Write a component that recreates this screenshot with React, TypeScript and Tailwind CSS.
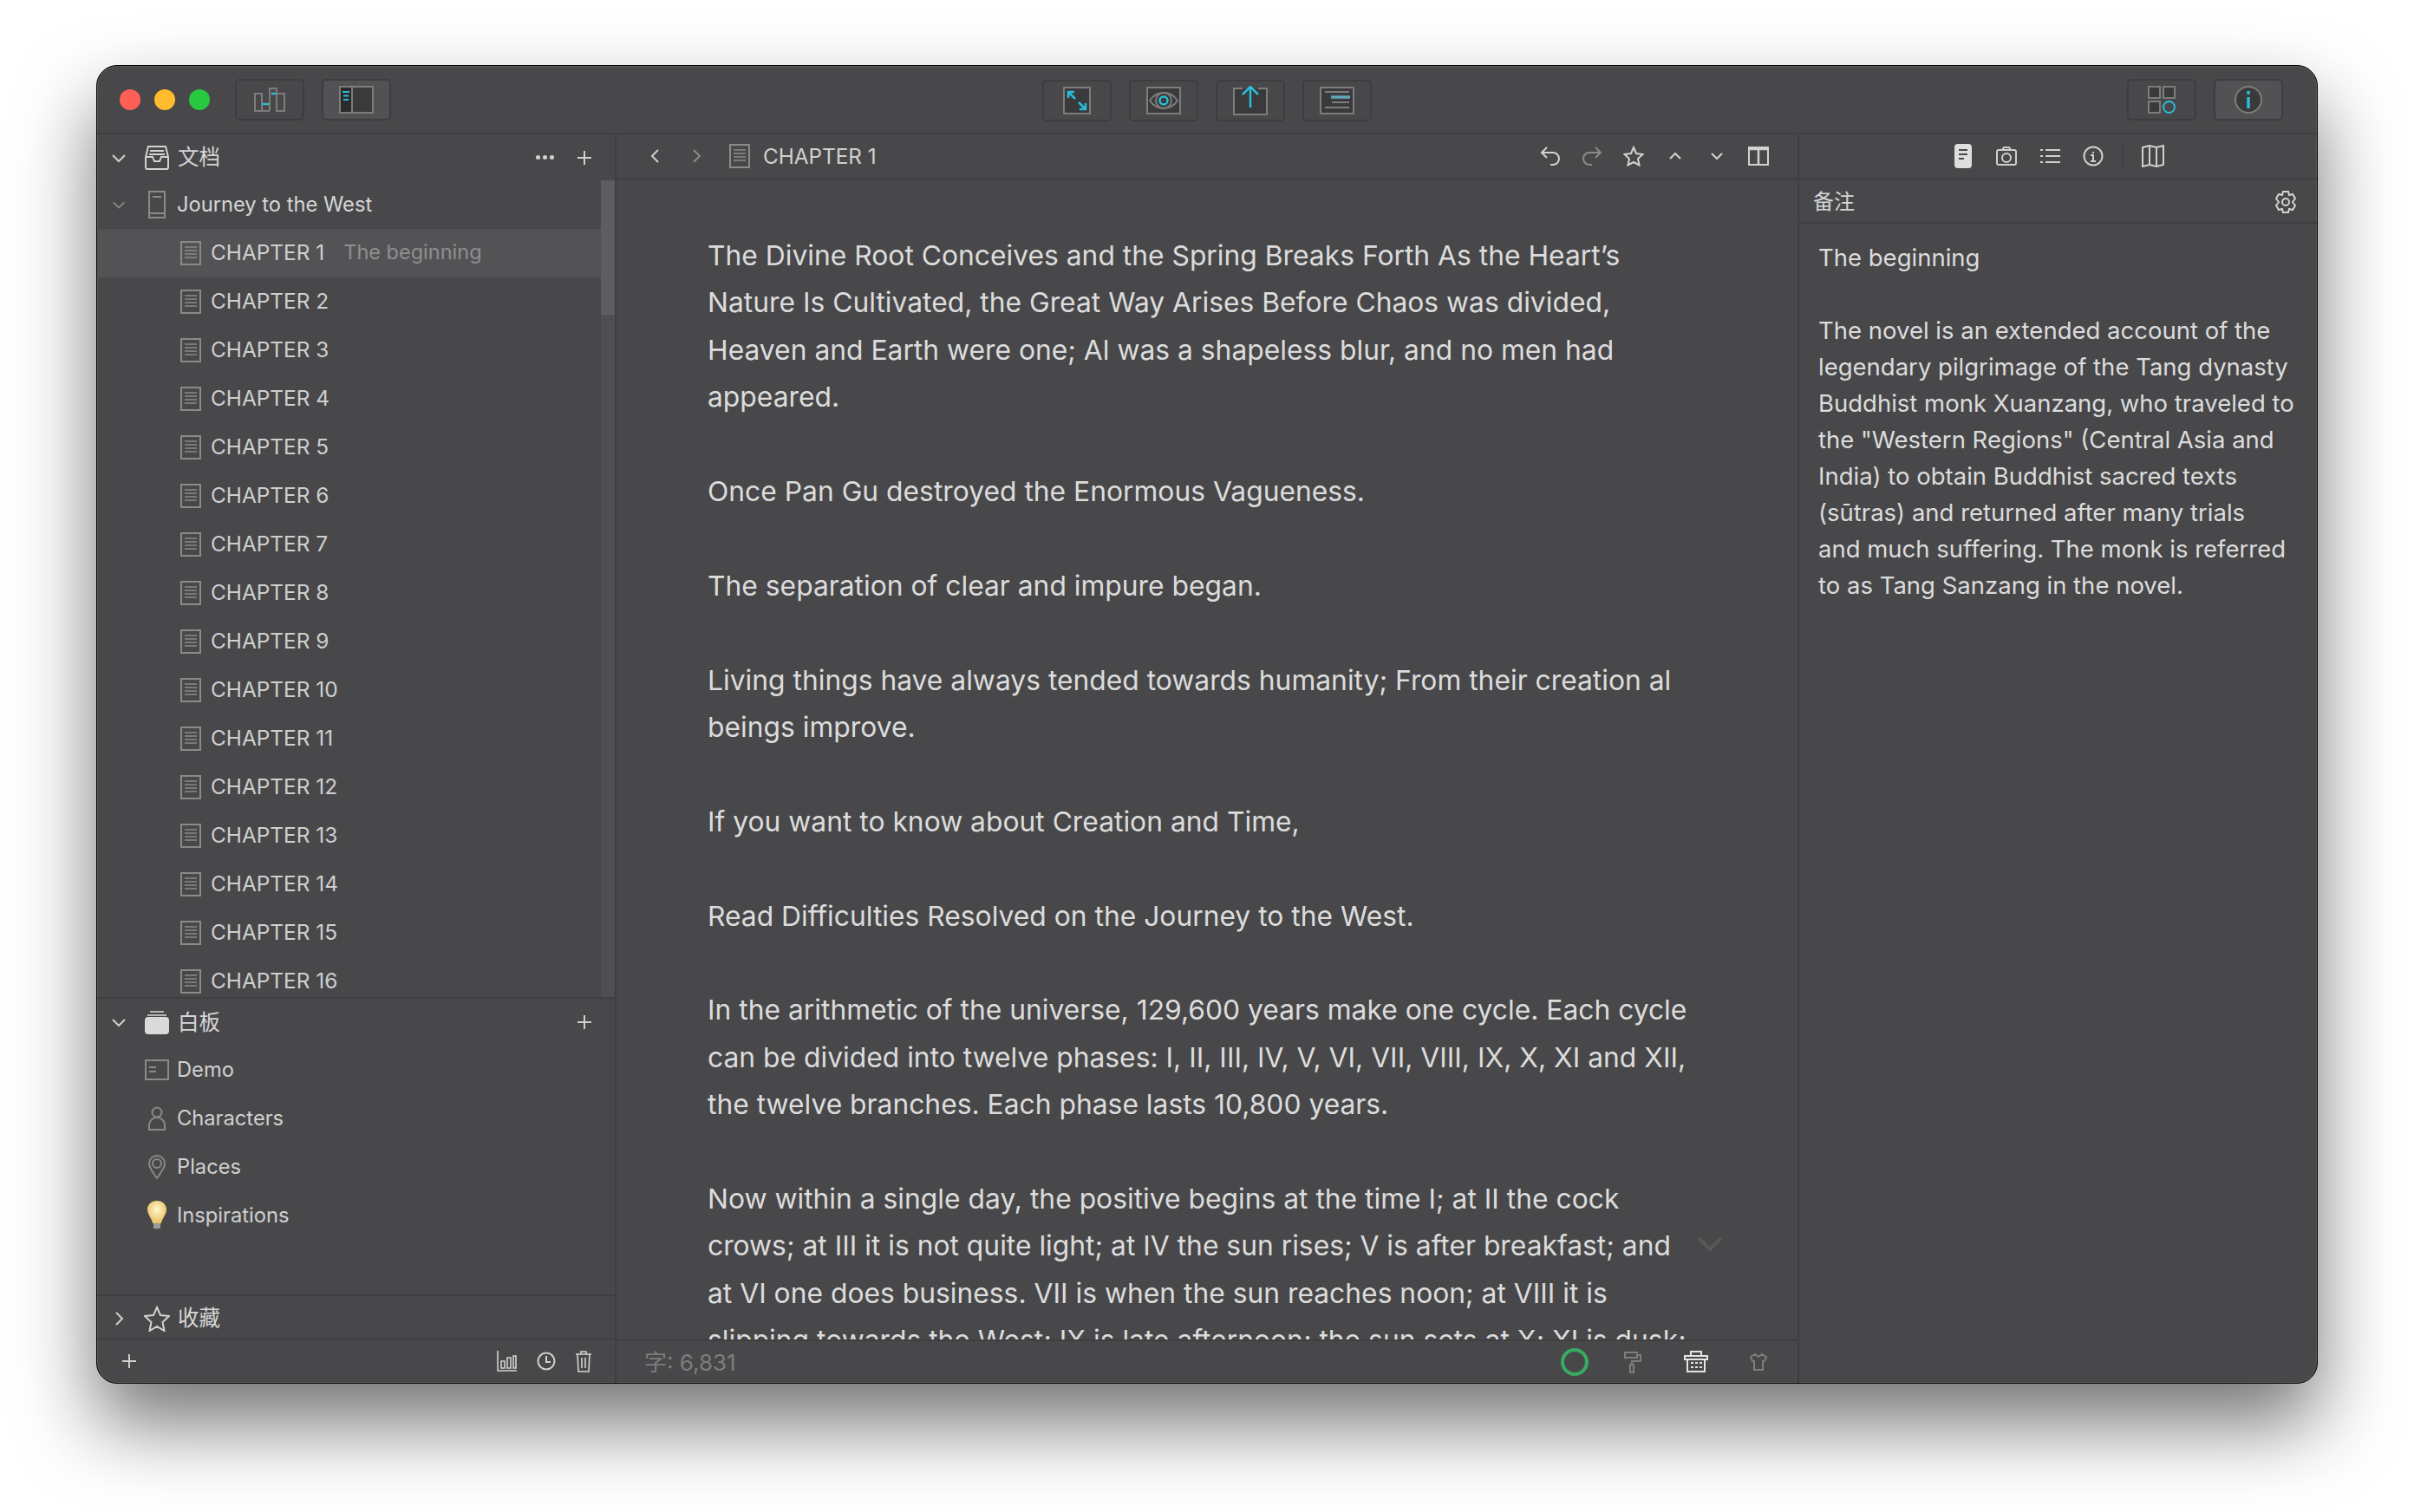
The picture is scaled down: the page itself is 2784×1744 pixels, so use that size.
import type { ReactNode } from "react";

const chapters = Array.from({ length: 16 }, (_, i) => `CHAPTER ${i + 1}`);

const body = [
  [
    "The Divine Root Conceives and the Spring Breaks Forth As the Heart’s",
    "Nature Is Cultivated, the Great Way Arises Before Chaos was divided,",
    "Heaven and Earth were one; Al was a shapeless blur, and no men had",
    "appeared.",
  ],
  ["Once Pan Gu destroyed the Enormous Vagueness."],
  ["The separation of clear and impure began."],
  [
    "Living things have always tended towards humanity; From their creation al",
    "beings improve.",
  ],
  ["If you want to know about Creation and Time,"],
  ["Read Difficulties Resolved on the Journey to the West."],
  [
    "In the arithmetic of the universe, 129,600 years make one cycle. Each cycle",
    "can be divided into twelve phases: I, II, III, IV, V, VI, VII, VIII, IX, X, XI and XII,",
    "the twelve branches. Each phase lasts 10,800 years.",
  ],
  [
    "Now within a single day, the positive begins at the time I; at II the cock",
    "crows; at III it is not quite light; at IV the sun rises; V is after breakfast; and",
    "at VI one does business. VII is when the sun reaches noon; at VIII it is",
    "slipping towards the West; IX is late afternoon; the sun sets at X; XI is dusk;",
  ],
];

const notes = [
  "The novel is an extended account of the",
  "legendary pilgrimage of the Tang dynasty",
  "Buddhist monk Xuanzang, who traveled to",
  "the \"Western Regions\" (Central Asia and",
  "India) to obtain Buddhist sacred texts",
  "(sūtras) and returned after many trials",
  "and much suffering. The monk is referred",
  "to as Tang Sanzang in the novel.",
];

const Icon = ({ size = 28, h, children, color = "#d2d2d2", sw = 2 }: { size?: number; h?: number; children: ReactNode; color?: string; sw?: number }) => (
  <svg width={size} height={h ?? size} viewBox={`0 0 ${size} ${h ?? size}`} fill="none" stroke={color} strokeWidth={sw} className="shrink-0">
    {children}
  </svg>
);

const Chevron = ({ dir, color = "#cfcfcf", s = 20 }: { dir: "down" | "up" | "left" | "right"; color?: string; s?: number }) => {
  const d = {
    down: "M3 7l7 7 7-7",
    up: "M3 13l7-7 7 7",
    left: "M13 3l-7 7 7 7",
    right: "M7 3l7 7-7 7",
  }[dir];
  return (
    <svg width={s} height={s} viewBox="0 0 20 20" fill="none" stroke={color} strokeWidth={2}>
      <path d={d} />
    </svg>
  );
};

const Plus = ({ color = "#cfcfcf" }: { color?: string }) => (
  <Icon size={16} color={color}>
    <path d="M8 0v16M0 8h16" />
  </Icon>
);

const DocIcon = () => (
  <Icon size={24} h={28} color="#8a8a8a">
    <rect x="1" y="1" width="22" height="26" />
    <path d="M5 7h14M5 11h14M5 15h14M5 19h14" strokeWidth="1.6" />
  </Icon>
);

const TitleBtn = ({ active, w = 80, children }: { active?: boolean; w?: number; children: ReactNode }) => (
  <div
    className={`h-[48px] rounded-[5px] border-2 border-[#3d3d3f] flex items-center justify-center shrink-0 ${active ? "bg-[#525254]" : ""}`}
    style={{ width: w }}
  >
    {children}
  </div>
);

const Section = ({ chevron, icon, label, right }: { chevron: ReactNode; icon: ReactNode; label: string; right?: ReactNode }) => (
  <div className="flex items-center h-full">
    <span className="w-[50px] flex justify-center shrink-0">{chevron}</span>
    <span className="w-[38px] flex justify-center shrink-0">{icon}</span>
    <span className="ml-[5px] text-[24.500px] text-[#d6d6d6] leading-none">{label}</span>
    <div className="ml-auto flex items-center gap-[27px] pr-[27px]">{right}</div>
  </div>
);

const BoardRow = ({ icon, label }: { icon: ReactNode; label: string }) => (
  <div className="flex items-center h-[56px] pl-[50px]">
    <span className="w-[38px] flex justify-center shrink-0">{icon}</span>
    <span className="ml-[4px] text-[23.700px] text-[#d0d0d0]">{label}</span>
  </div>
);

const Sidebar = () => (
  <aside className="w-[599px] shrink-0 border-r-2 border-[#3f3f41] flex flex-col">
    <div className="h-[53px] shrink-0">
      <Section
        chevron={<Chevron dir="down" />}
        icon={
          <Icon size={28}>
            <path d="M4 1h20l3 12v12a2 2 0 0 1-2 2H3a2 2 0 0 1-2-2V13zM1 13h8l2 5h6l2-5h8M6 6h16M5 10h18" />
          </Icon>
        }
        label="文档"
        right={
          <>
            <span className="flex gap-[3px]">
              <i className="size-[5px] rounded-full bg-[#d2d2d2]" />
              <i className="size-[5px] rounded-full bg-[#d2d2d2]" />
              <i className="size-[5px] rounded-full bg-[#d2d2d2]" />
            </span>
            <Plus />
          </>
        }
      />
    </div>
    <div className="h-[944px] shrink-0 overflow-hidden relative border-b-2 border-[#3f3f41]">
      <div className="pr-[16px]">
        <div className="flex items-center h-[56px]">
          <span className="w-[50px] flex justify-center shrink-0">
            <Chevron dir="down" color="#8a8a8a" s={18} />
          </span>
          <span className="w-[38px] flex justify-center shrink-0">
            <Icon size={20} h={32} color="#8a8a8a">
              <rect x="1" y="1" width="18" height="30" />
              <path d="M1 26h18M5 7h10" />
            </Icon>
          </span>
          <span className="ml-[4px] text-[23.700px] text-[#d6d6d6]">Journey to the West</span>
        </div>
        {chapters.map((c, i) => (
          <div key={c} className={`flex items-center h-[56px] pl-[96px] gap-[11px] ${i === 0 ? "bg-[#535356]" : ""}`}>
            <DocIcon />
            <span className="mb-[2px] text-[24.400px] text-[#cfcfcf] whitespace-nowrap">{c}</span>
            {i === 0 && <span className="mb-[2px] ml-[11px] text-[23.500px] text-[#8f8f8f]">The beginning</span>}
          </div>
        ))}
      </div>
      <div className="absolute top-0 right-0 bottom-0 w-[16px] bg-[#4f4f51]">
        <div className="h-[155px] bg-[#5e5e60]" />
      </div>
    </div>
    <div className="h-[54px] shrink-0">
      <Section
        chevron={<Chevron dir="down" />}
        icon={
          <Icon size={28} color="#dadada">
            <path d="M6 2h16M3 6h22" strokeWidth="1.6" />
            <rect x="1" y="9" width="26" height="18" rx="3" fill="#dadada" />
          </Icon>
        }
        label="白板"
        right={<Plus />}
      />
    </div>
    <BoardRow
      label="Demo"
      icon={
        <Icon size={28} h={24} color="#8a8a8a">
          <rect x="1" y="1" width="26" height="22" />
          <path d="M5 9h8M5 14h8" />
        </Icon>
      }
    />
    <BoardRow
      label="Characters"
      icon={
        <Icon size={20} h={28} color="#8a8a8a">
          <circle cx="10" cy="7" r="5.5" />
          <path d="M1 27v-5c0-5 4-9 9-9s9 4 9 9v5z" />
        </Icon>
      }
    />
    <BoardRow
      label="Places"
      icon={
        <Icon size={20} h={28} color="#8a8a8a">
          <path d="M10 27C5 20 1 15 1 10a9 9 0 0 1 18 0c0 5-4 10-9 17z" />
          <circle cx="10" cy="10" r="5" />
        </Icon>
      }
    />
    <BoardRow
      label="Inspirations"
      icon={
        <svg width="22" height="34" viewBox="0 0 22 34">
          <defs>
            <radialGradient id="bulb" cx="50%" cy="40%" r="60%">
              <stop offset="0%" stopColor="#fff6cf" />
              <stop offset="100%" stopColor="#e8bf5e" />
            </radialGradient>
          </defs>
          <path d="M11 0c6 0 11 4 11 10 0 6-5 10-6 16H6C5 20 0 16 0 10 0 4 5 0 11 0z" fill="url(#bulb)" />
          <rect x="7" y="26" width="8" height="6" fill="#9a9a96" />
          <rect x="9" y="32" width="4" height="2" fill="#55554f" />
        </svg>
      }
    />
    <div className="flex-1 border-b-2 border-[#3f3f41]" />
    <div className="h-[50px] shrink-0 pt-[3px] border-b-2 border-[#3f3f41]">
      <Section
        chevron={<Chevron dir="right" />}
        icon={
          <Icon size={30}>
            <path d="M15 2l4 9 10 1-7.500 7 2 10L15 24l-8.500 5 2-10L1 12l10-1z" />
          </Icon>
        }
        label="收藏"
      />
    </div>
    <div className="h-[50px] shrink-0 flex items-center pl-[29px] pr-[26px]">
      <Plus />
      <div className="ml-auto flex items-center gap-[22px]">
        <Icon size={24}>
          <path d="M1 0v23h22M5 12h4v8H5zM12 8h4v12h-4zM19 6h3v14h-3z" strokeWidth="1.6" />
        </Icon>
        <Icon size={22}>
          <circle cx="11" cy="11" r="9.500" />
          <path d="M11 5v7h5" />
        </Icon>
        <Icon size={20} h={26}>
          <path d="M1 5h18M7 5V2h6v3M3 5l1 20h12l1-20M8 9v12M12 9v12" strokeWidth="1.6" />
        </Icon>
      </div>
    </div>
  </aside>
);

const Editor = () => (
  <main className="flex-1 min-w-0 flex flex-col border-r-2 border-[#3f3f41] relative">
    <div className="h-[52px] shrink-0 border-b-2 border-[#3f3f41] flex items-center">
      <span className="ml-[35px] w-[20px]">
        <Chevron dir="left" />
      </span>
      <span className="ml-[27px] w-[20px]">
        <Chevron dir="right" color="#8a8a8a" />
      </span>
      <span className="ml-[28px]">
        <Icon size={24} h={28} color="#8a8a8a">
          <rect x="1" y="1" width="22" height="26" />
          <path d="M5 7h14M5 11h14M5 15h14M5 19h14" strokeWidth="1.6" />
        </Icon>
      </span>
      <span className="ml-[15px] text-[24.300px] text-[#d0d0d0]">CHAPTER 1</span>
      <div className="ml-auto mr-[33px] flex items-center gap-[24px]">
        <Icon size={24}>
          <path d="M8 2L2 8l6 6M2 8h13a7 7 0 0 1 0 14h-3" />
        </Icon>
        <Icon size={24} color="#8a8a8a">
          <path d="M16 2l6 6-6 6M22 8H9a7 7 0 0 0 0 14h3" />
        </Icon>
        <Icon size={24}>
          <path d="M12 2l3 7 7.500 1-5.500 5 1.500 7.500L12 19l-6.500 3.500L7 15 1.500 10 9 9z" />
        </Icon>
        <Icon size={24}>
          <path d="M6 15l6-6 6 6" />
        </Icon>
        <Icon size={24}>
          <path d="M6 9l6 6 6-6" />
        </Icon>
        <Icon size={24}>
          <rect x="1" y="2" width="22" height="20" />
          <path d="M1 4h22M12 3v18" strokeWidth="2.500" />
        </Icon>
      </div>
    </div>
    <div className="flex-1 min-h-0 overflow-hidden pl-[105px] pt-[61px] border-b-2 border-[#3f3f41]">
      {body.map((lines) => (
        <p key={lines[0]} className="mb-[54.400px] text-[31.800px] leading-[54.400px] text-[#dcdcdc] whitespace-nowrap">
          {lines.map((l) => (
            <span key={l} className="block">
              {l}
            </span>
          ))}
        </p>
      ))}
    </div>
    <svg width="30" height="18" viewBox="0 0 30 18" fill="none" stroke="#58585a" strokeWidth="4" className="absolute left-[1246px] top-[1271px]">
      <path d="M2 2l13 13L28 2" />
    </svg>
    <div className="h-[48px] shrink-0 flex items-center pl-[32px]">
      <span className="text-[26px] text-[#7d7d7d]">字: 6,831</span>
      <div className="ml-auto mr-[35px] flex items-center">
        <span className="size-[32px] rounded-full border-[4px] border-[#38ac64]" />
        <span className="ml-[41px] flex">
          <Icon size={20} h={26} color="#7d7d7d">
            <path d="M1 2h14v6H1zM15 5h4v7H9v4M7 16h4v9H7z" />
          </Icon>
        </span>
        <span className="ml-[49px] flex">
          <Icon size={28} h={26} color="#e4e4e4">
            <path d="M8 6V1h12v5M1 6h26v4H1zM4 10v14h20V10M8 14h3M13 14h3M18 14h3M8 19h3M13 19h3M18 19h3" />
          </Icon>
        </span>
        <span className="ml-[48px] flex">
          <Icon size={20} h={20} color="#7d7d7d">
            <path d="M6 1l4 3 4-3 5 3-2 5h-2v10H5V9H3L1 4z" />
          </Icon>
        </span>
      </div>
    </div>
  </main>
);

const Inspector = () => (
  <aside className="w-[597px] shrink-0 flex flex-col">
    <div className="h-[52px] shrink-0 border-b-2 border-[#3f3f41] flex items-center pl-[179px] gap-[26px]">
      <Icon size={22} h={28} color="#dedede">
        <rect x="1" y="1" width="18" height="26" rx="3" fill="#dedede" />
        <path d="M5 7h10M5 12h10M5 17h6" stroke="#48484a" strokeWidth="2" />
      </Icon>
      <Icon size={24} color="#cfcfcf">
        <rect x="1" y="5" width="22" height="17" rx="2" />
        <circle cx="12" cy="14" r="5" />
        <path d="M7 5l2-3h6l2 3" />
      </Icon>
      <Icon size={24} color="#cfcfcf">
        <path d="M7 5h17M7 12h17M7 19h17M1 5h3M1 12h3M1 19h3" />
      </Icon>
      <Icon size={24} color="#cfcfcf">
        <circle cx="12" cy="12" r="10.500" />
        <path d="M12 7v2M9 11h3v7M9 18h6" />
      </Icon>
      <span className="w-[2px] h-[28px] bg-[#3f3f41] mx-[-5px]" />
      <Icon size={26} color="#cfcfcf">
        <path d="M1 3l8-2 8 2 8-2v22l-8 2-8-2-8 2zM9 1v22M17 3v22" />
      </Icon>
    </div>
    <div className="h-[51px] shrink-0 border-b-2 border-[#3f3f41] flex items-center pl-[16px] pr-[23px]">
      <span className="mt-[2px] text-[24px] text-[#d6d6d6]">备注</span>
      <span className="ml-auto mt-[2px]">
        <Icon size={26}>
          <path d="M10 1h6l1 4 4-1 3 5-3 4 3 4-3 5-4-1-1 4h-6l-1-4-4 1-3-5 3-4-3-4 3-5 4 1z" />
          <circle cx="13" cy="13" r="4" />
        </Icon>
      </span>
    </div>
    <div className="pl-[22px] pt-[18px] text-[27.500px] leading-[42px] text-[#dcdcdc] whitespace-nowrap">
      <div className="mb-[42px]">The beginning</div>
      {notes.map((n) => (
        <div key={n}>{n}</div>
      ))}
    </div>
  </aside>
);

export default function App() {
  return (
    <div className="w-[2784px] h-[1744px] bg-white pt-[75px] pl-[111px] overflow-hidden font-['Inter','Noto_Sans_CJK_SC',sans-serif]">
      <div className="w-[2562px] h-[1521px] rounded-[24px] bg-[#48484a] flex flex-col overflow-hidden border border-black shadow-[0_46px_90px_rgba(0,0,0,0.55),inset_0_0_0_1px_#5c5c5e]">
        <header className="h-[79px] shrink-0 border-b-2 border-[#3f3f41] relative flex items-center pl-[26px] pr-[39px]">
          <span className="size-[24px] rounded-full bg-[#ff5f57]" />
          <span className="ml-[16px] size-[24px] rounded-full bg-[#febc2e]" />
          <span className="ml-[16px] size-[24px] rounded-full bg-[#28c840]" />
          <div className="ml-[29px] flex gap-[20px]">
            <TitleBtn>
              <svg width="36" height="28" viewBox="0 0 36 28" fill="none" stroke="#7d7d7d" strokeWidth="2">
                <path d="M1 7h8v20H1zM9 27h9M18 27V1h8v26M26 7h9v20h-9z" />
                <path d="M10 19h7M20 7h5" stroke="#2bbcd8" strokeWidth="2.500" />
              </svg>
            </TitleBtn>
            <TitleBtn active>
              <svg width="40" height="32" viewBox="0 0 40 32" fill="#3a3a3c" stroke="#7d7d7d" strokeWidth="2">
                <rect x="1" y="1" width="38" height="30" />
                <rect x="1" y="1" width="14" height="30" fill="#2a2a2c" />
                <path d="M4 7h8M5 11.500h6M5 16h6" stroke="#2bbcd8" strokeWidth="2" />
              </svg>
            </TitleBtn>
          </div>
          <div className="absolute left-[1090px] top-[16px] flex gap-[20px]">
            <TitleBtn>
              <svg width="32" height="32" viewBox="0 0 32 32" fill="#3a3a3c" stroke="#7d7d7d" strokeWidth="2">
                <rect x="1" y="1" width="30" height="30" />
                <path d="M6 13V6h7M6 6l8 8M26 19v7h-7M26 26l-8-8" fill="none" stroke="#2bbcd8" strokeWidth="2.500" />
              </svg>
            </TitleBtn>
            <TitleBtn>
              <svg width="40" height="32" viewBox="0 0 40 32" fill="#3a3a3c" stroke="#7d7d7d" strokeWidth="2">
                <rect x="1" y="1" width="38" height="30" />
                <path d="M4 16c8-12 24-12 32 0-8 12-24 12-32 0z" fill="none" />
                <circle cx="20" cy="16" r="9" fill="none" />
                <circle cx="20" cy="16" r="4.500" fill="none" stroke="#2bbcd8" strokeWidth="2.500" />
              </svg>
            </TitleBtn>
            <TitleBtn>
              <svg width="40" height="34" viewBox="0 0 40 34" fill="none" stroke="#7d7d7d" strokeWidth="2">
                <rect x="1" y="3" width="38" height="30" fill="#3a3a3c" stroke="none" />
                <path d="M11 3H1v30h38V3H29" />
                <path d="M20 25V1M11 10l9-9 9 9" stroke="#2bbcd8" strokeWidth="2.500" />
              </svg>
            </TitleBtn>
            <TitleBtn>
              <svg width="40" height="32" viewBox="0 0 40 32" fill="#3a3a3c" stroke="#7d7d7d" strokeWidth="2">
                <rect x="1" y="1" width="38" height="30" />
                <path d="M6 6h28M14 18h20M6 24h28" fill="none" />
                <path d="M13 12h22" stroke="#5fa8b8" strokeWidth="3.500" />
              </svg>
            </TitleBtn>
          </div>
          <div className="ml-auto flex gap-[20px]">
            <TitleBtn>
              <svg width="32" height="32" viewBox="0 0 32 32" fill="#3a3a3c" stroke="#7d7d7d" strokeWidth="2">
                <rect x="1" y="1" width="13" height="13" />
                <rect x="18" y="1" width="13" height="13" />
                <rect x="1" y="18" width="13" height="13" />
                <ellipse cx="24.500" cy="24.500" rx="6.500" ry="6.500" fill="none" stroke="#2bbcd8" />
              </svg>
            </TitleBtn>
            <TitleBtn active>
              <svg width="32" height="32" viewBox="0 0 32 32" fill="#3a3a3c" stroke="#7d7d7d" strokeWidth="2">
                <circle cx="16" cy="16" r="15" />
                <path d="M16 6v4M16 13v13" stroke="#2bbcd8" strokeWidth="3.500" />
              </svg>
            </TitleBtn>
          </div>
        </header>
        <div className="flex-1 min-h-0 flex">
          <Sidebar />
          <Editor />
          <Inspector />
        </div>
      </div>
    </div>
  );
}
